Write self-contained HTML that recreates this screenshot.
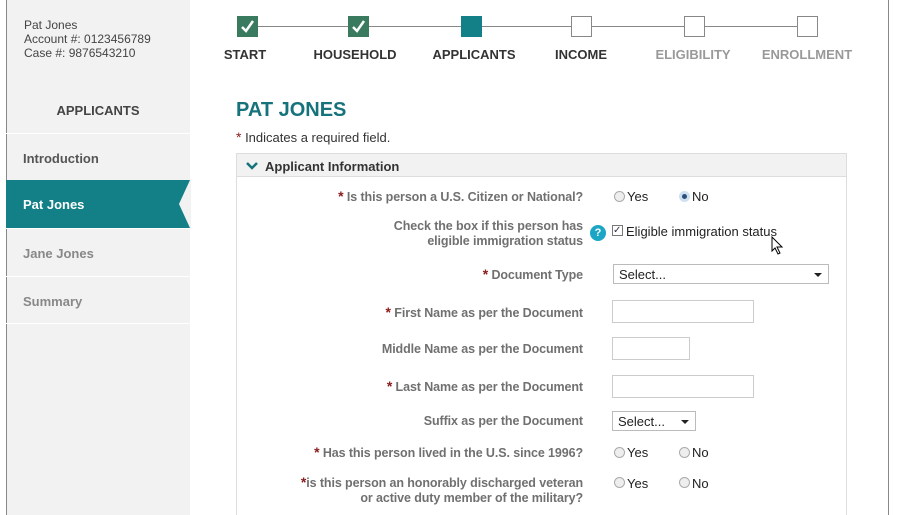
<!DOCTYPE html><html><head><style>
*{box-sizing:border-box;margin:0;padding:0}
html,body{width:897px;height:515px;overflow:hidden}
body{background:#fff;font-family:"Liberation Sans",Arial,sans-serif;position:relative}
.a{position:absolute}
.side{left:6px;top:0;width:184px;height:515px;background:#f2f2f2;border-left:1px solid #888}
.nav{left:6px;width:184px;height:48px;border-top:1px solid #fff;font-weight:bold;font-size:13px;color:#555;padding:17px 0 0 17px}
.box{width:21px;height:21px;top:16px;border:1px solid #888;background:#fff}
.box.d{background:#3a7a5e;border-color:#3a7a5e}
.box.c{background:#138088;border-color:#138088}
.st{top:47px;font-size:13px;font-weight:bold;color:#333;text-align:center;width:120px}
.lb{right:314px;font-size:12.5px;font-weight:bold;color:#707070;text-align:right;line-height:15px;letter-spacing:-0.1px}
.r{color:#8b1a1a;font-size:14px}
.rad{width:11px;height:11px;border-radius:50%;border:1px solid #aaa;background:#eee}
.opt{font-size:13px;color:#222}
.in{border:1px solid #ccc;height:23px;background:#fff}
.sel{border:1px solid #bbb;height:20px;font-size:13px;color:#222;padding:2px 5px;background:#fff}
.sel:after{content:"";position:absolute;right:6px;top:8px;border:4px solid transparent;border-top:4px solid #222}
</style></head><body>
<div class="a side"></div>
<div class="a" style="left:888px;top:0;width:1px;height:515px;background:#888"></div>
<div class="a" style="left:24px;top:18px;font-size:12px;color:#444;line-height:14px">Pat Jones<br>Account #: 0123456789<br>Case #: 9876543210</div>
<div class="a" style="left:6px;top:103px;width:184px;text-align:center;font-size:13px;font-weight:bold;color:#444">APPLICANTS</div>
<div class="a nav" style="top:133px">Introduction</div>
<div class="a nav" style="top:180px;background:#138088;color:#fff;border-top:none">Pat Jones</div>
<svg class="a" style="left:178px;top:180px" width="13" height="48"><path d="M13 0 L12 0 L1 24 L12 48 L13 48Z" fill="#f2f2f2"/></svg>
<div class="a nav" style="top:228px;color:#888">Jane Jones</div>
<div class="a nav" style="top:276px;color:#888;border-bottom:1px solid #fff">Summary</div>
<div class="a" style="left:247px;top:26px;width:560px;height:1px;background:#888"></div>
<div class="a box d" style="left:237px"><svg width="19" height="19"><path d="M4 10 L8 14 L15 4" stroke="#fff" stroke-width="2.5" fill="none"/></svg></div>
<div class="a box d" style="left:348px"><svg width="19" height="19"><path d="M4 10 L8 14 L15 4" stroke="#fff" stroke-width="2.5" fill="none"/></svg></div>
<div class="a box c" style="left:461px"></div>
<div class="a box" style="left:571px"></div>
<div class="a box" style="left:684px"></div>
<div class="a box" style="left:797px"></div>
<div class="a st" style="left:185px">START</div>
<div class="a st" style="left:295px">HOUSEHOLD</div>
<div class="a st" style="left:414px">APPLICANTS</div>
<div class="a st" style="left:521px">INCOME</div>
<div class="a st" style="left:633px;color:#999">ELIGIBILITY</div>
<div class="a st" style="left:747px;color:#999">ENROLLMENT</div>
<div class="a" style="left:236px;top:99px;font-size:20px;font-weight:bold;color:#17737b">PAT JONES</div>
<div class="a" style="left:236px;top:129px;font-size:13px;color:#333"><span class="r">*</span> Indicates a required field.</div>
<div class="a" style="left:236px;top:153px;width:611px;height:362px;border:1px solid #ddd;border-bottom:none"></div>
<div class="a" style="left:237px;top:154px;width:609px;height:23px;background:#f2f2f2;border-bottom:1px solid #ddd"></div>
<svg class="a" style="left:245px;top:161px" width="14" height="10"><path d="M2 2 L7 7 L12 2" stroke="#17737b" stroke-width="2.5" fill="none"/></svg>
<div class="a" style="left:265px;top:159px;font-size:13px;font-weight:bold;color:#333">Applicant Information</div>

<div class="a lb" style="top:189px"><span class="r">*</span> Is this person a U.S. Citizen or National?</div>
<div class="a rad" style="left:614px;top:191px"></div><div class="a opt" style="left:627px;top:189px">Yes</div>
<div class="a rad" style="left:679px;top:191px;background:#2a4f7a;border:3px solid #cfe0f0"></div><div class="a opt" style="left:692px;top:189px">No</div>

<div class="a lb" style="top:219px">Check the box if this person has<br>eligible immigration status</div>
<div class="a" style="left:590px;top:225px;width:16px;height:16px;border-radius:50%;background:#1aa6c4;color:#fff;font-size:11px;font-weight:bold;text-align:center;line-height:16px">?</div>
<div class="a" style="left:612px;top:225px;width:11px;height:11px;border:1px solid #777;background:#fff;font-size:10px;line-height:9px;color:#334">✓</div>
<div class="a opt" style="left:626px;top:224px">Eligible immigration status</div>
<svg class="a" style="left:771px;top:236px" width="14" height="20"><path d="M1 1 L1 15 L4 12 L7 18 L9 17 L6 11 L11 11Z" fill="#fff" stroke="#000"/></svg>

<div class="a lb" style="top:267px"><span class="r">*</span> Document Type</div>
<div class="a sel" style="left:613px;top:264px;width:216px">Select...</div>
<div class="a lb" style="top:305px"><span class="r">*</span> First Name as per the Document</div>
<div class="a in" style="left:612px;top:300px;width:142px"></div>
<div class="a lb" style="top:342px">Middle Name as per the Document</div>
<div class="a in" style="left:612px;top:337px;width:78px"></div>
<div class="a lb" style="top:379px"><span class="r">*</span> Last Name as per the Document</div>
<div class="a in" style="left:612px;top:375px;width:142px"></div>
<div class="a lb" style="top:414px">Suffix as per the Document</div>
<div class="a sel" style="left:612px;top:411px;width:84px">Select...</div>
<div class="a lb" style="top:445px"><span class="r">*</span> Has this person lived in the U.S. since 1996?</div>
<div class="a rad" style="left:614px;top:447px"></div><div class="a opt" style="left:627px;top:445px">Yes</div>
<div class="a rad" style="left:679px;top:447px"></div><div class="a opt" style="left:692px;top:445px">No</div>
<div class="a lb" style="top:475px"><span class="r">*</span>is this person an honorably discharged veteran<br>or active duty member of the military?</div>
<div class="a rad" style="left:614px;top:477px"></div><div class="a opt" style="left:627px;top:476px">Yes</div>
<div class="a rad" style="left:679px;top:477px"></div><div class="a opt" style="left:692px;top:476px">No</div>
</body></html>
